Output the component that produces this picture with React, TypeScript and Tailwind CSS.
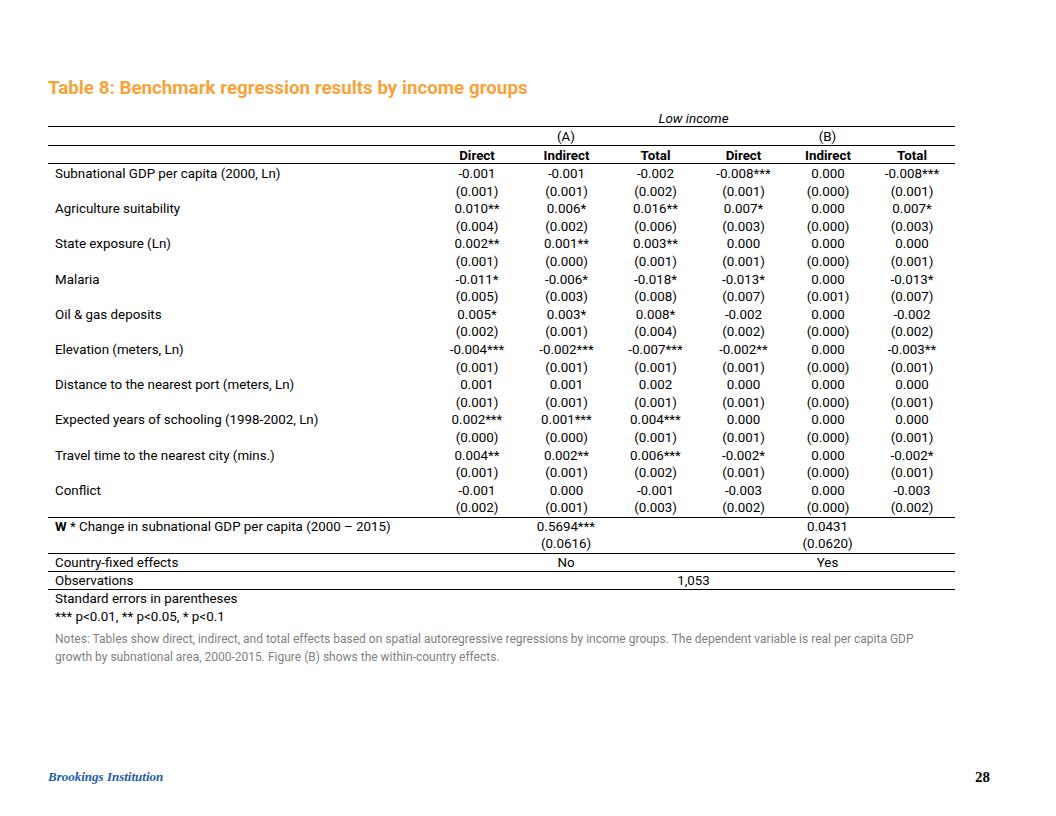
import React from 'react';

type Row = { label?: string; coef: string[]; se: string[] };

const rows: Row[] = [
  {
    label: 'Subnational GDP per capita (2000, Ln)',
    coef: ['-0.001', '-0.001', '-0.002', '-0.008***', '0.000', '-0.008***'],
    se: ['(0.001)', '(0.001)', '(0.002)', '(0.001)', '(0.000)', '(0.001)'],
  },
  {
    label: 'Agriculture suitability',
    coef: ['0.010**', '0.006*', '0.016**', '0.007*', '0.000', '0.007*'],
    se: ['(0.004)', '(0.002)', '(0.006)', '(0.003)', '(0.000)', '(0.003)'],
  },
  {
    label: 'State exposure (Ln)',
    coef: ['0.002**', '0.001**', '0.003**', '0.000', '0.000', '0.000'],
    se: ['(0.001)', '(0.000)', '(0.001)', '(0.001)', '(0.000)', '(0.001)'],
  },
  {
    label: 'Malaria',
    coef: ['-0.011*', '-0.006*', '-0.018*', '-0.013*', '0.000', '-0.013*'],
    se: ['(0.005)', '(0.003)', '(0.008)', '(0.007)', '(0.001)', '(0.007)'],
  },
  {
    label: 'Oil & gas deposits',
    coef: ['0.005*', '0.003*', '0.008*', '-0.002', '0.000', '-0.002'],
    se: ['(0.002)', '(0.001)', '(0.004)', '(0.002)', '(0.000)', '(0.002)'],
  },
  {
    label: 'Elevation (meters, Ln)',
    coef: ['-0.004***', '-0.002***', '-0.007***', '-0.002**', '0.000', '-0.003**'],
    se: ['(0.001)', '(0.001)', '(0.001)', '(0.001)', '(0.000)', '(0.001)'],
  },
  {
    label: 'Distance to the nearest port (meters, Ln)',
    coef: ['0.001', '0.001', '0.002', '0.000', '0.000', '0.000'],
    se: ['(0.001)', '(0.001)', '(0.001)', '(0.001)', '(0.000)', '(0.001)'],
  },
  {
    label: 'Expected years of schooling (1998-2002, Ln)',
    coef: ['0.002***', '0.001***', '0.004***', '0.000', '0.000', '0.000'],
    se: ['(0.000)', '(0.000)', '(0.001)', '(0.001)', '(0.000)', '(0.001)'],
  },
  {
    label: 'Travel time to the nearest city (mins.)',
    coef: ['0.004**', '0.002**', '0.006***', '-0.002*', '0.000', '-0.002*'],
    se: ['(0.001)', '(0.001)', '(0.002)', '(0.001)', '(0.000)', '(0.001)'],
  },
  {
    label: 'Conflict',
    coef: ['-0.001', '0.000', '-0.001', '-0.003', '0.000', '-0.003'],
    se: ['(0.002)', '(0.001)', '(0.003)', '(0.002)', '(0.000)', '(0.002)'],
  },
];

const cols = 'grid grid-cols-[384px_90px_89px_89px_87px_82px_86px]';

function Line({ label, cells }: { label?: React.ReactNode; cells: string[] }) {
  return (
    <div className={`${cols} h-[17.6px] items-center leading-[17.6px]`}>
      <div className="pl-[7px] whitespace-nowrap">{label}</div>
      {cells.map((c, i) => (
        <div key={i} className="text-center whitespace-nowrap">
          {c}
        </div>
      ))}
    </div>
  );
}

export default function App() {
  return (
    <div className="w-[1056px] h-[816px] bg-white flex flex-col font-['Roboto','Liberation_Sans',sans-serif] text-[13.35px] text-black">
      <div className="pt-[76px] pl-[48px] pr-[101px]">
        <h1 className="text-[18.8px] leading-[24px] font-bold text-[#f8a33a]">
          Table 8: Benchmark regression results by income groups
        </h1>

        <div className="mt-[11px]">
          {/* group headers */}
          <div className="grid grid-cols-[384px_523px] h-[16px] leading-[16px] border-b border-black">
            <div />
            <div className="text-center italic">Low income</div>
          </div>
          <div className="grid grid-cols-[384px_268px_255px] h-[19px] leading-[19px] border-b border-black">
            <div />
            <div className="text-center">(A)</div>
            <div className="text-center">(B)</div>
          </div>
          <div className={`${cols} h-[18px] leading-[19px] font-bold border-b border-black`}>
            <div />
            <div className="text-center">Direct</div>
            <div className="text-center">Indirect</div>
            <div className="text-center">Total</div>
            <div className="text-center">Direct</div>
            <div className="text-center">Indirect</div>
            <div className="text-center">Total</div>
          </div>

          {/* coefficients */}
          <div className="border-b border-black pt-px">
            {rows.map((r) => (
              <React.Fragment key={r.label}>
                <Line label={r.label} cells={r.coef} />
                <Line cells={r.se} />
              </React.Fragment>
            ))}
          </div>

          {/* spatial lag */}
          <div className="border-b border-black">
            <div className="grid grid-cols-[384px_268px_255px] h-[17.6px] leading-[17.6px]">
              <div className="pl-[7px]">
                <span className="font-bold">W</span> * Change in subnational GDP per capita (2000 – 2015)
              </div>
              <div className="text-center">0.5694***</div>
              <div className="text-center">0.0431</div>
            </div>
            <div className="grid grid-cols-[384px_268px_255px] h-[17.6px] leading-[17.6px]">
              <div />
              <div className="text-center">(0.0616)</div>
              <div className="text-center">(0.0620)</div>
            </div>
          </div>

          <div className="grid grid-cols-[384px_268px_255px] h-[18px] leading-[18px] border-b border-black">
            <div className="pl-[7px]">Country-fixed effects</div>
            <div className="text-center">No</div>
            <div className="text-center">Yes</div>
          </div>
          <div className="grid grid-cols-[384px_523px] h-[18px] leading-[18px] border-b border-black">
            <div className="pl-[7px]">Observations</div>
            <div className="text-center">1,053</div>
          </div>

          <div className="pl-[7px] leading-[17.6px]">
            <p>Standard errors in parentheses</p>
            <p>*** p&lt;0.01, ** p&lt;0.05, * p&lt;0.1</p>
          </div>
        </div>

        <p className="mt-[5px] pl-[7px] text-[12px] leading-[18px] text-[#7f7f7f] pr-[20px]">
          Notes: Tables show direct, indirect, and total effects based on spatial autoregressive regressions by income groups. The dependent variable is real per capita GDP growth by subnational area, 2000-2015. Figure (B) shows the within-country effects.
        </p>
      </div>

      <footer className="mt-auto pb-[31px] pl-[48px] pr-[66px] flex items-center justify-between leading-[16px]">
        <span className="font-['Liberation_Serif',serif] italic font-bold text-[13px] text-[#1d5ba6]">
          Brookings Institution
        </span>
        <span className="font-['Liberation_Serif',serif] font-bold text-[15px] text-black">28</span>
      </footer>
    </div>
  );
}
